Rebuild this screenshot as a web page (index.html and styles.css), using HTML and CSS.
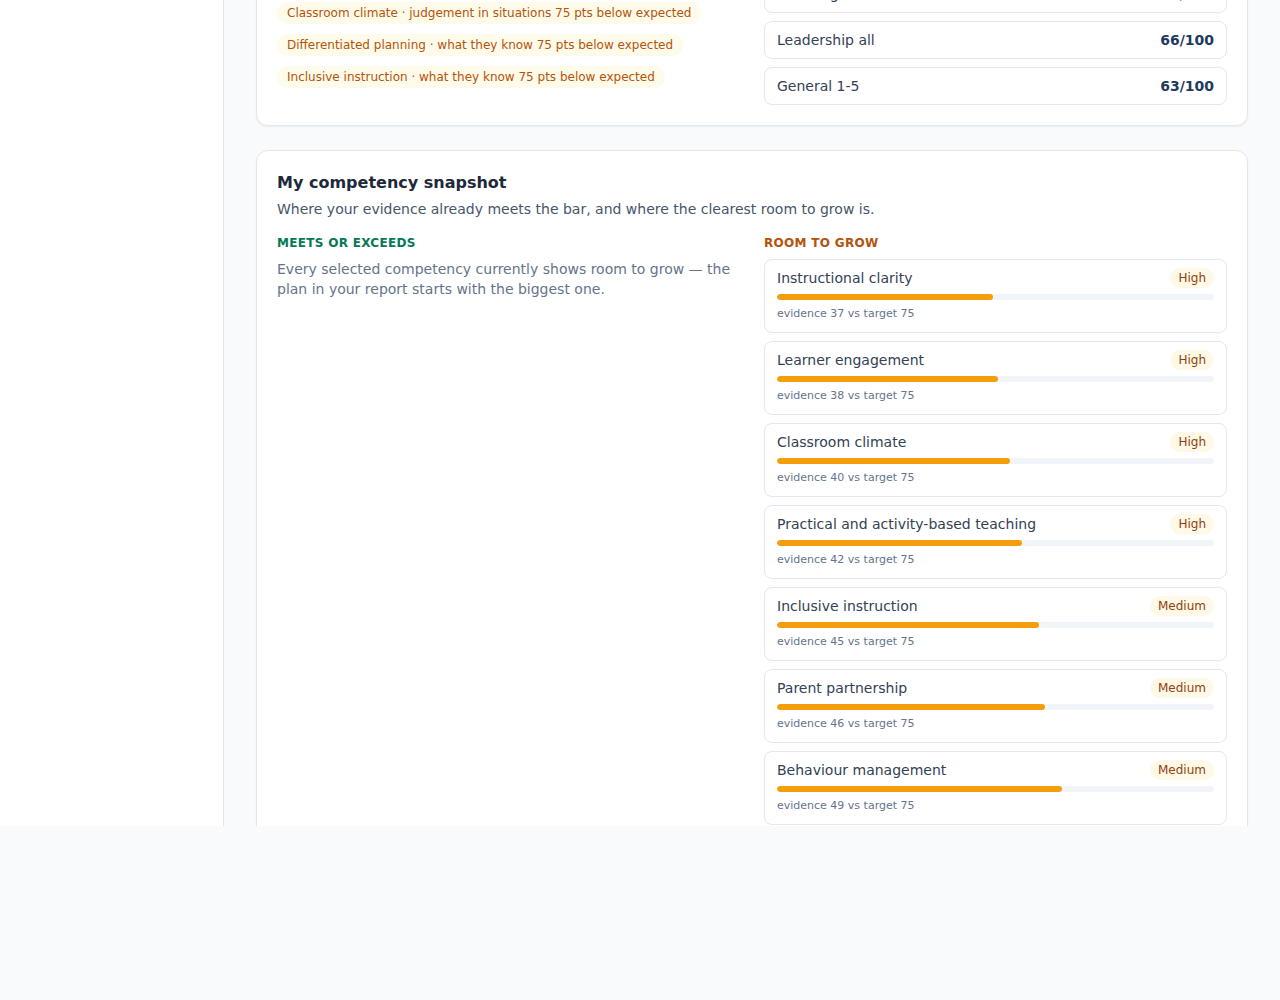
FILE: index.html
```html
<!DOCTYPE html>
<html lang="en">
<head>
<meta charset="utf-8">
<title>Competency snapshot</title>
<link rel="stylesheet" href="styles.css">
</head>
<body>
<div class="app">
  <aside class="sidebar"></aside>
  <main class="main" id="main">
    <div class="stack">
      <section class="card" id="scores-card">
        <h2 class="card-title">My scores</h2>
        <p class="card-sub">How your latest assessment compares with what is expected.</p>
        <div class="cols">
          <div class="col">
            <div class="label label-warn">Biggest gaps</div>
            <p class="col-note">Areas furthest below the expected level.</p>
            <div class="pills">
              <span class="pill">Classroom climate · judgement in situations 75 pts below expected</span>
              <span class="pill">Differentiated planning · what they know 75 pts below expected</span>
              <span class="pill">Inclusive instruction · what they know 75 pts below expected</span>
            </div>
          </div>
          <div class="col">
            <div class="label label-muted">Scores by area</div>
            <div class="rows">
              <div class="score-row"><span>Teaching all</span><b>58/100</b></div>
              <div class="score-row"><span>Leadership all</span><b>66/100</b></div>
              <div class="score-row"><span>General 1-5</span><b>63/100</b></div>
            </div>
          </div>
        </div>
      </section>

      <section class="card">
        <h2 class="card-title">My competency snapshot</h2>
        <p class="card-sub">Where your evidence already meets the bar, and where the clearest room to grow is.</p>
        <div class="cols">
          <div class="col">
            <div class="label label-good">Meets or exceeds</div>
            <p class="empty-note">Every selected competency currently shows room to grow — the plan in your report starts with the biggest one.</p>
          </div>
          <div class="col">
            <div class="label label-warn">Room to grow</div>
            <div class="items">
              <div class="item">
                <div class="item-head"><span class="item-name">Instructional clarity</span><span class="badge">High</span></div>
                <div class="track"><div class="fill" style="width:49.33%"></div></div>
                <div class="item-meta">evidence 37 vs target 75</div>
              </div>
              <div class="item">
                <div class="item-head"><span class="item-name">Learner engagement</span><span class="badge">High</span></div>
                <div class="track"><div class="fill" style="width:50.67%"></div></div>
                <div class="item-meta">evidence 38 vs target 75</div>
              </div>
              <div class="item">
                <div class="item-head"><span class="item-name">Classroom climate</span><span class="badge">High</span></div>
                <div class="track"><div class="fill" style="width:53.33%"></div></div>
                <div class="item-meta">evidence 40 vs target 75</div>
              </div>
              <div class="item">
                <div class="item-head"><span class="item-name">Practical and activity-based teaching</span><span class="badge">High</span></div>
                <div class="track"><div class="fill" style="width:56%"></div></div>
                <div class="item-meta">evidence 42 vs target 75</div>
              </div>
              <div class="item">
                <div class="item-head"><span class="item-name">Inclusive instruction</span><span class="badge">Medium</span></div>
                <div class="track"><div class="fill" style="width:60%"></div></div>
                <div class="item-meta">evidence 45 vs target 75</div>
              </div>
              <div class="item">
                <div class="item-head"><span class="item-name">Parent partnership</span><span class="badge">Medium</span></div>
                <div class="track"><div class="fill" style="width:61.33%"></div></div>
                <div class="item-meta">evidence 46 vs target 75</div>
              </div>
              <div class="item">
                <div class="item-head"><span class="item-name">Behaviour management</span><span class="badge">Medium</span></div>
                <div class="track"><div class="fill" style="width:65.33%"></div></div>
                <div class="item-meta">evidence 49 vs target 75</div>
              </div>
              <div class="item">
                <div class="item-head"><span class="item-name">Differentiated planning</span><span class="badge">Medium</span></div>
                <div class="track"><div class="fill" style="width:68%"></div></div>
                <div class="item-meta">evidence 51 vs target 75</div>
              </div>
            </div>
          </div>
        </div>
      </section>
    </div>
  </main>
</div>
<script src="script.js"></script>
</body>
</html>
```

FILE: styles.css
```css
* { box-sizing: border-box; }

html, body {
  margin: 0;
  padding: 0;
}

body {
  background: #f8fafc;
  font-family: "DejaVu Sans", "Noto Sans", sans-serif;
  color: #1e293b;
  height: 1000px;
}

.app {
  display: flex;
  height: 826px;
  overflow: hidden;
}

.sidebar {
  width: 224px;
  flex: 0 0 224px;
  background: #ffffff;
  border-right: 1px solid #e2e8f0;
}

.main {
  flex: 1;
  background: #f8fafc;
  overflow: hidden;
  padding: 32px;
}

.stack {
  display: flex;
  flex-direction: column;
  gap: 24px;
}

.card {
  background: #ffffff;
  border: 1px solid #e2e8f0;
  border-radius: 12px;
  box-shadow: 0 1px 2px rgba(15, 23, 42, 0.06);
  padding: 20px;
}

.card-title {
  margin: 0;
  font-size: 16px;
  line-height: 24px;
  font-weight: 700;
  color: #1e293b;
}

.card-sub {
  margin: 4px 0 0;
  font-size: 14px;
  line-height: 20px;
  color: #475569;
}

.cols {
  margin-top: 16px;
  display: grid;
  grid-template-columns: 1fr 1fr;
  gap: 24px;
  align-items: start;
}

.label {
  font-size: 12px;
  line-height: 16px;
  font-weight: 700;
  letter-spacing: 0.3px;
  text-transform: uppercase;
  margin-bottom: 8px;
}

.label-good { color: #047857; }
.label-warn { color: #b45309; }
.label-muted { color: #64748b; }

.col-note {
  margin: 0 0 7px;
  font-size: 14px;
  line-height: 20px;
  color: #64748b;
}

.empty-note {
  margin: 0;
  font-size: 14px;
  line-height: 20px;
  color: #64748b;
}

.pills {
  display: flex;
  flex-direction: column;
  align-items: flex-start;
  gap: 10px;
}

.pill {
  display: inline-block;
  background: #fffbeb;
  color: #b45309;
  font-size: 12px;
  line-height: 16px;
  padding: 3px 10px;
  border-radius: 999px;
}

.rows {
  display: flex;
  flex-direction: column;
  gap: 8px;
}

.score-row {
  display: flex;
  justify-content: space-between;
  align-items: center;
  height: 38px;
  padding: 0 12px;
  border: 1px solid #e2e8f0;
  border-radius: 8px;
  font-size: 14px;
  color: #334155;
}

.score-row b {
  color: #1e3a5f;
  font-weight: 700;
}

.items {
  display: flex;
  flex-direction: column;
  gap: 8px;
}

.item {
  border: 1px solid #e2e8f0;
  border-radius: 8px;
  padding: 8px 12px 10px;
}

.item-head {
  display: flex;
  justify-content: space-between;
  align-items: center;
  height: 20px;
}

.item-name {
  font-size: 14px;
  line-height: 20px;
  color: #334155;
}

.badge {
  font-size: 12px;
  line-height: 20px;
  padding: 0 8px;
  border-radius: 999px;
  background: #fef9e7;
  color: #92400e;
}

.track {
  margin-top: 6px;
  height: 6px;
  border-radius: 999px;
  background: #f1f5f9;
  overflow: hidden;
}

.fill {
  height: 100%;
  border-radius: 999px;
  background: #f59e0b;
}

.item-meta {
  margin-top: 6px;
  font-size: 11px;
  line-height: 16px;
  color: #64748b;
}
```

FILE: script.js
```js
(function () {
  var main = document.getElementById('main');
  var card = document.getElementById('scores-card');
  // Scroll the content so the first card's bottom edge sits at y = 126.
  var mainTop = main.getBoundingClientRect().top;
  var cardBottom = card.getBoundingClientRect().bottom - mainTop;
  main.scrollTop = Math.max(0, cardBottom - 126);
})();
```
